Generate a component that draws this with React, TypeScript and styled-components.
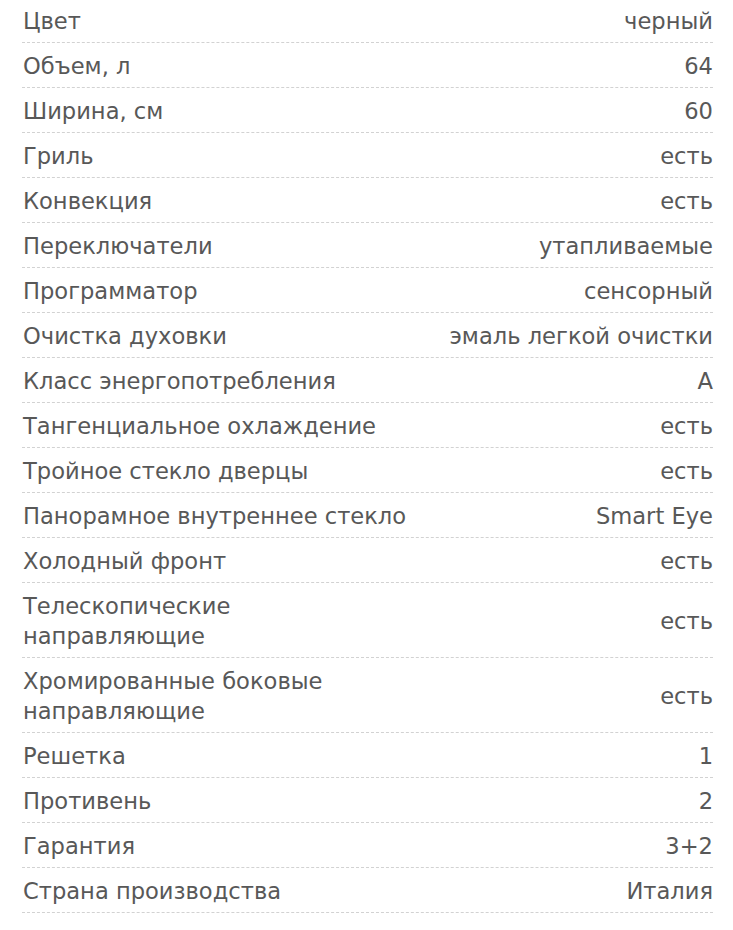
import React from "react";
import styled, { createGlobalStyle } from "styled-components";

const Global = createGlobalStyle`
  html, body { margin: 0; padding: 0; background: #fff; }
`;

const Table = styled.div`
  display: flex;
  flex-direction: column;
  padding: 0 20px 0 22px;
  margin-top: -2px;
  font-family: "DejaVu Sans", Verdana, sans-serif;
  font-size: 22.6px;
  line-height: 30px;
  color: #585858;
`;

const Row = styled.div`
  display: flex;
  justify-content: space-between;
  align-items: center;
  gap: 24px;
  padding: 8px 0 6px 1px;
  border-bottom: 1px dashed #d2d2d2;
`;

const Name = styled.div``;

const Value = styled.div`
  text-align: right;
  white-space: nowrap;
`;

const rows: [string, string][] = [
  ["Цвет", "черный"],
  ["Объем, л", "64"],
  ["Ширина, см", "60"],
  ["Гриль", "есть"],
  ["Конвекция", "есть"],
  ["Переключатели", "утапливаемые"],
  ["Программатор", "сенсорный"],
  ["Очистка духовки", "эмаль легкой очистки"],
  ["Класс энергопотребления", "A"],
  ["Тангенциальное охлаждение", "есть"],
  ["Тройное стекло дверцы", "есть"],
  ["Панорамное внутреннее стекло", "Smart Eye"],
  ["Холодный фронт", "есть"],
  ["Телескопические\nнаправляющие", "есть"],
  ["Хромированные боковые\nнаправляющие", "есть"],
  ["Решетка", "1"],
  ["Противень", "2"],
  ["Гарантия", "3+2"],
  ["Страна производства", "Италия"],
];

const Line = styled.div``;

export default function App() {
  return (
    <>
      <Global />
      <Table>
        {rows.map(([n, v]) => (
          <Row key={n}>
            <Name>
              {n.split("\n").map((s, i) => (
                <Line key={i}>{s}</Line>
              ))}
            </Name>
            <Value>{v}</Value>
          </Row>
        ))}
      </Table>
    </>
  );
}
